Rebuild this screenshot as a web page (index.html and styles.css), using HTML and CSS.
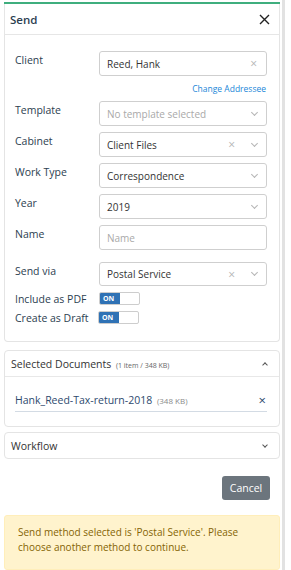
FILE: index.html
```html
<!DOCTYPE html>
<html lang="en">

<head>
    <meta charset="UTF-8">
    <meta name="viewport" content="width=device-width, initial-scale=1.0">
    <title>Send</title>
    <link rel="stylesheet" href="styles.css">
</head>

<body>
    <div class="wrap">
        <div class="panel">
            <div class="head">
                <span class="title">Send</span>
                <svg class="close" width="11" height="11" viewBox="0 0 11 11"><path d="M1 1L10 10M10 1L1 10" stroke="#222" stroke-width="1.4" fill="none"/></svg>
            </div>

            <div class="card form">
                <div class="row">
                    <label>Client</label>
                    <div class="field">
                        <span class="val">Reed, Hank</span>
                        <span class="clear clear-last">&times;</span>
                    </div>
                </div>
                <div class="link-row"><a href="#">Change Addressee</a></div>
                <div class="row">
                    <label>Template</label>
                    <div class="field">
                        <span class="val ph">No template selected</span>
                        <span class="arrow"></span>
                    </div>
                </div>
                <div class="row">
                    <label>Cabinet</label>
                    <div class="field">
                        <span class="val">Client Files</span>
                        <span class="clear">&times;</span>
                        <span class="arrow"></span>
                    </div>
                </div>
                <div class="row">
                    <label>Work Type</label>
                    <div class="field">
                        <span class="val">Correspondence</span>
                        <span class="arrow"></span>
                    </div>
                </div>
                <div class="row">
                    <label>Year</label>
                    <div class="field">
                        <span class="val">2019</span>
                        <span class="arrow"></span>
                    </div>
                </div>
                <div class="row row-name">
                    <label>Name</label>
                    <div class="field">
                        <span class="val ph">Name</span>
                    </div>
                </div>
                <div class="row">
                    <label>Send via</label>
                    <div class="field field-short">
                        <span class="val">Postal Service</span>
                        <span class="clear">&times;</span>
                        <span class="arrow"></span>
                    </div>
                </div>
                <div class="toggle-row">
                    <label>Include as PDF</label>
                    <span class="toggle"><span class="on">ON</span></span>
                </div>
                <div class="toggle-row">
                    <label>Create as Draft</label>
                    <span class="toggle toggle-left"><span class="on">ON</span></span>
                </div>
            </div>

            <div class="card docs">
                <div class="card-head">
                    <span>Selected Documents <small>(1 item / 348 KB)</small></span>
                    <span class="chev up"></span>
                </div>
                <div class="doc-body">
                    <div class="doc">
                        <span class="doc-name">Hank_Reed-Tax-return-2018 <small>(348 KB)</small></span>
                        <span class="doc-x">&times;</span>
                    </div>
                </div>
            </div>

            <div class="card flow">
                <div class="card-head">
                    <span>Workflow</span>
                    <span class="chev"></span>
                </div>
            </div>

            <div class="actions">
                <button class="btn">Cancel</button>
            </div>

            <div class="alert">Send method selected is 'Postal Service'. Please choose another method to continue.</div>
        </div>
        <div class="scroll"></div>
    </div>
</body>

</html>
```

FILE: styles.css
```css
* {
    margin: 0;
    padding: 0;
    box-sizing: border-box;
}

body {
    background-color: #fff;
    font-family: "Open Sans", "Noto Sans", sans-serif;
    font-size: 10px;
    color: #333;
}

a {
    text-decoration: none;
}

.wrap {
    display: flex;
    height: 570px;
    overflow: hidden;
}

.panel {
    width: 276px;
    margin-left: 4px;
    border-top: 2px solid #3fae7e;
    margin-top: 2px;
}

.scroll {
    width: 3px;
    margin-left: 2px;
    background-color: #e2e2e2;
}

.head {
    display: flex;
    align-items: center;
    justify-content: space-between;
    height: 31px;
    padding: 0 9px 0 5px;
    border-left: 1px solid #e6e6e6;
    border-right: 1px solid #e6e6e6;
    border-bottom: 1px solid #e6e6e6;
}

.title {
    font-weight: 600;
    font-size: 11.5px;
    color: #2c3e50;
}

.card {
    border: 1px solid #e4e4e4;
    border-radius: 4px;
}

.form {
    border-top: none;
    border-radius: 0 0 4px 4px;
    padding: 16px 12px 17px 10px;
}

.row {
    display: flex;
    align-items: flex-start;
    margin-bottom: 6px;
}

.row label,
.toggle-row label {
    width: 84px;
    flex-shrink: 0;
    color: #2c3e50;
    font-size: 10.5px;
}

.row label {
    padding-top: 2px;
}

.row-name {
    margin-bottom: 12px;
}

.field {
    flex: 1;
    display: flex;
    align-items: center;
    height: 25px;
    padding: 0 8px 0 7px;
    border: 1px solid #cfcfcf;
    border-radius: 3px;
    background-color: #fff;
}

.field-short {
    height: 24px;
}

.val {
    flex: 1;
    color: #333;
    white-space: nowrap;
}

.val.ph {
    color: #a9a9a9;
}

.clear {
    color: #b5b5b5;
    font-size: 12px;
    margin-right: 17px;
}

.clear-last {
    margin-right: 1px;
}

.arrow {
    width: 5px;
    height: 5px;
    border-right: 1px solid #b5b5b5;
    border-bottom: 1px solid #b5b5b5;
    transform: rotate(45deg);
    margin: -3px 1px 0 0;
}

.link-row {
    text-align: right;
    margin: 0 1px 5px 0;
    font-size: 8.5px;
    line-height: 14px;
}

.link-row a {
    color: #1b87d8;
}

.toggle-row {
    display: flex;
    align-items: center;
    height: 13px;
    margin-bottom: 6px;
}

.toggle-row:last-child {
    margin-bottom: 0;
}

.toggle {
    display: flex;
    width: 41px;
    height: 13px;
    border: 1px solid #cdcdcd;
    border-radius: 2px;
    overflow: hidden;
}

.toggle-left {
    margin-left: -1px;
}

.on {
    width: 20px;
    background-color: #2f72b5;
    color: #fff;
    font-size: 7px;
    font-weight: 700;
    line-height: 11px;
    padding-left: 3px;
}

.docs {
    margin-top: 8px;
}

.card-head {
    display: flex;
    align-items: center;
    justify-content: space-between;
    height: 25px;
    padding: 0 12px 0 6px;
    color: #333;
    font-size: 10.5px;
}

.card-head small {
    font-size: 7px;
    color: #666;
    margin-left: 2px;
}

.chev {
    width: 4px;
    height: 4px;
    border-right: 1px solid #555;
    border-bottom: 1px solid #555;
    transform: rotate(45deg);
    margin-top: -2px;
}

.chev.up {
    transform: rotate(-135deg);
    margin-top: 2px;
}

.doc-body {
    border-top: 1px solid #e8e8e8;
    padding: 15px 12px 14px 10px;
}

.doc {
    display: flex;
    align-items: center;
    justify-content: space-between;
    height: 20px;
    border-bottom: 1px solid #d3dbe4;
    padding-bottom: 3px;
}

.doc-name {
    color: #2e4a6e;
    font-size: 10.5px;
}

.doc-name small {
    font-size: 8px;
    color: #8a8a8a;
    margin-left: 2px;
}

.doc-x {
    color: #2e4a6e;
    font-size: 13px;
    margin-right: 1px;
}

.flow {
    margin-top: 5px;
}

.actions {
    display: flex;
    justify-content: flex-end;
    padding: 17px 10px 15px 0;
}

.btn {
    width: 48px;
    height: 24px;
    border: none;
    border-radius: 3px;
    background-color: #6c757d;
    color: #fff;
    font-family: "Open Sans", "Noto Sans", sans-serif;
    font-size: 10.5px;
}

.alert {
    background-color: #fff3cd;
    border: 1px solid #ffeeba;
    border-radius: 3px;
    padding: 9px 14px 14px 13px;
    color: #856404;
    line-height: 15px;
}
```
